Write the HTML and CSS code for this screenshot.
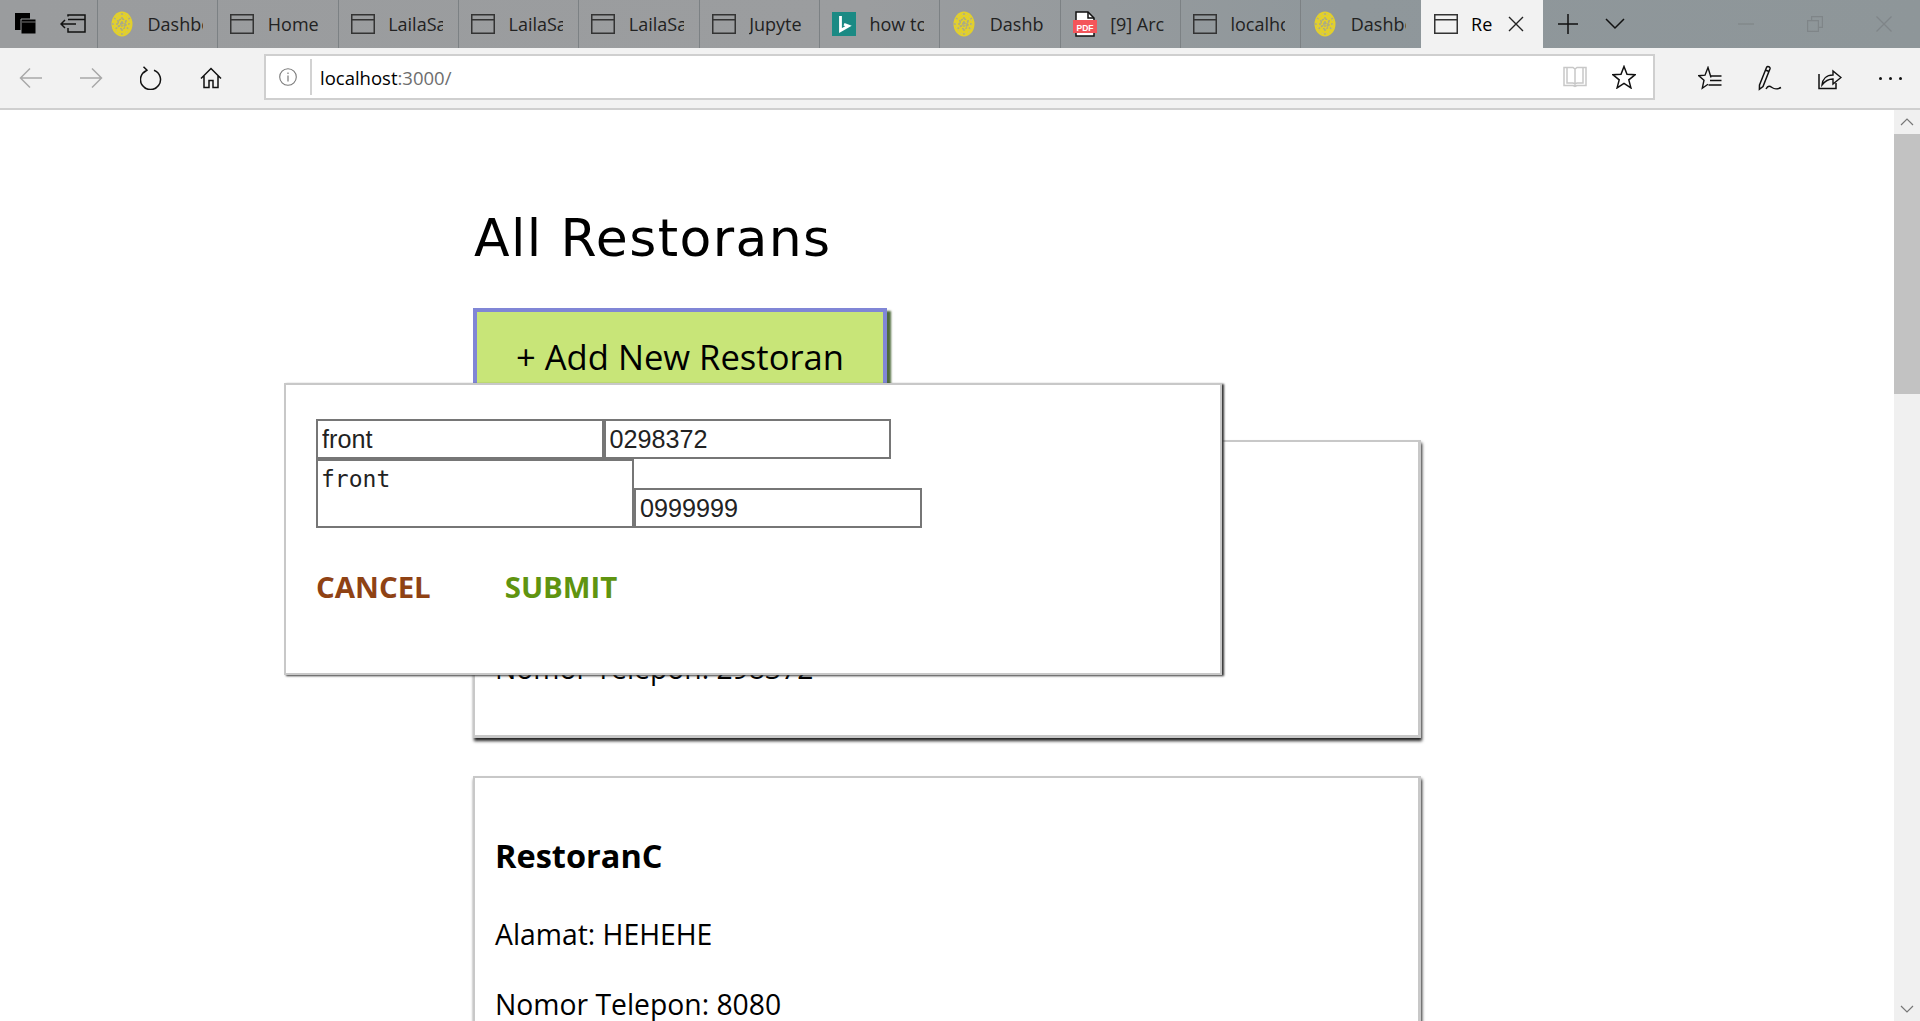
FILE: index.html
```html
<!DOCTYPE html>
<html lang="en">
<head>
    <meta charset="UTF-8">
    <meta name="viewport" content="width=device-width, initial-scale=1.0">
    <title>Restorans</title>
    <link rel="stylesheet" href="styles.css">
</head>
<body>
    <svg class="defs" width="0" height="0">
        <defs>
            <symbol id="page" viewBox="0 0 24 20">
                <path d="M.75.75h22.5v18.5H.75zM.75 5.75h22.5" fill="none" stroke="#333" stroke-width="1.5"/>
            </symbol>
            <symbol id="seal" viewBox="0 0 22 26">
                <ellipse cx="11" cy="13" rx="10.5" ry="12.5" fill="#e3d02a"/>
                <path d="M11 2v22M3 7l16 12M19 7L3 19M1 13h20" stroke="#a9a98a" stroke-width="1.4" stroke-dasharray="2 2"/>
                <ellipse cx="11" cy="13" rx="4" ry="5" fill="none" stroke="#a9a98a" stroke-width="1.4" stroke-dasharray="2 1.5"/>
                <ellipse cx="11" cy="13" rx="8" ry="10" fill="none" stroke="#c9c270" stroke-width="1.2" stroke-dasharray="1.5 2.5"/>
            </symbol>
        </defs>
    </svg>

    <div class="browser">
        <div class="tabbar">
            <div class="tab-controls">
                <svg class="ctl" width="24" height="24" viewBox="0 0 24 24"><path d="M1 1h15v3h-15zM1 4h15v14H1z" fill="#000"/><path d="M7 7h15v15H7z" fill="#000" stroke="#9a9c9e" stroke-width="1"/><path d="M8 10h14" stroke="#777" stroke-width="1"/></svg>
                <svg class="ctl" width="26" height="20" viewBox="0 0 26 20"><path d="M8 2.5V1h17v17H8v-4M8 5.5h17M1 10h15M5 6l-4 4 4 4" fill="none" stroke="#111" stroke-width="1.5"/></svg>
            </div>
            <div class="tab"><svg class="favicon" width="22" height="26"><use href="#seal"/></svg><span class="tab-title">Dashboard</span></div>
            <div class="tab"><svg class="favicon" width="24" height="20"><use href="#page"/></svg><span class="tab-title">Home</span></div>
            <div class="tab"><svg class="favicon" width="24" height="20"><use href="#page"/></svg><span class="tab-title">LailaSalsabila</span></div>
            <div class="tab"><svg class="favicon" width="24" height="20"><use href="#page"/></svg><span class="tab-title">LailaSalsabila</span></div>
            <div class="tab"><svg class="favicon" width="24" height="20"><use href="#page"/></svg><span class="tab-title">LailaSalsabila</span></div>
            <div class="tab"><svg class="favicon" width="24" height="20"><use href="#page"/></svg><span class="tab-title">Jupyte</span></div>
            <div class="tab"><svg class="favicon" width="24" height="24" viewBox="0 0 24 24"><path d="M0 0h24v24H0z" fill="#1b8a84"/><path d="M8.500 4v14.500l8-4.500-4.500-1.800" fill="none" stroke="#fff" stroke-width="2.800"/></svg><span class="tab-title">how to</span></div>
            <div class="tab"><svg class="favicon" width="22" height="26"><use href="#seal"/></svg><span class="tab-title">Dashb</span></div>
            <div class="tab"><svg class="favicon" width="24" height="26" viewBox="0 0 24 26"><path d="M3 1h12l6 6v18H3z" fill="#fff" stroke="#111" stroke-width="1.5"/><path d="M15 1v6h6" fill="none" stroke="#111" stroke-width="1.5"/><path d="M0 9h24v13H0z" fill="#f4555a"/><text class="pdf-label" x="12" y="19.5">PDF</text></svg><span class="tab-title">[9] Arc</span></div>
            <div class="tab"><svg class="favicon" width="24" height="20"><use href="#page"/></svg><span class="tab-title">localhost</span></div>
            <div class="tab"><svg class="favicon" width="22" height="26"><use href="#seal"/></svg><span class="tab-title">Dashboard</span></div>
            <div class="tab tab-active">
                <svg class="favicon" width="24" height="20"><use href="#page"/></svg>
                <span class="tab-title">Re</span>
                <svg class="tab-close" width="16" height="16" viewBox="0 0 16 16"><path d="M1 1l14 14M15 1L1 15" stroke="#222" stroke-width="1.4"/></svg>
            </div>
            <div class="tab-actions">
                <svg width="22" height="22" viewBox="0 0 22 22"><path d="M11 1v20M1 11h20" stroke="#111" stroke-width="1.5"/></svg>
                <svg width="20" height="12" viewBox="0 0 20 12"><path d="M1 1l9 9 9-9" fill="none" stroke="#111" stroke-width="1.5"/></svg>
            </div>
            <div class="window-controls">
                <svg width="16" height="2" viewBox="0 0 16 2"><path d="M0 1h16" stroke="#7f8588" stroke-width="1.2"/></svg>
                <svg width="16" height="16" viewBox="0 0 16 16"><path d="M.6 4.6h10.8v10.8H.6zM4.6 4V.6h10.8v10.8H12" fill="none" stroke="#7f8588" stroke-width="1.2"/></svg>
                <svg width="16" height="16" viewBox="0 0 16 16"><path d="M.5.5l15 15M15.500.5l-15 15" stroke="#7f8588" stroke-width="1.2"/></svg>
            </div>
        </div>

        <div class="toolbar">
            <div class="nav-buttons">
                <div class="tool"><svg width="24" height="22" viewBox="0 0 24 22"><path d="M23 11H2M11 1.500L1.500 11l9.500 9.500" fill="none" stroke="#a9a9a9" stroke-width="1.5"/></svg></div>
                <div class="tool"><svg width="24" height="22" viewBox="0 0 24 22"><path d="M1 11h21M13 1.500l9.500 9.500-9.500 9.500" fill="none" stroke="#a9a9a9" stroke-width="1.500"/></svg></div>
                <div class="tool"><svg width="22" height="24" viewBox="0 0 22 24"><path d="M7 4.200a10 10 0 1 0 7 0M3.500 .8l3.500 3.400-3.600 2.800" fill="none" stroke="#111" stroke-width="1.500"/></svg></div>
                <div class="tool"><svg width="22" height="22" viewBox="0 0 22 22"><path d="M1 11.500L11 1.500l10 10M4 9v11.500h5v-7h4v7h5V9" fill="none" stroke="#111" stroke-width="1.500"/></svg></div>
            </div>
            <div class="urlbar">
                <svg class="info" width="18" height="18" viewBox="0 0 18 18"><circle cx="9" cy="9" r="8.300" fill="none" stroke="#7a7a7a" stroke-width="1.100"/><path d="M9 7.500v6M9 4.500v1.500" stroke="#7a7a7a" stroke-width="1.200"/></svg>
                <div class="url"><span class="host">localhost</span><span class="port">:3000/</span></div>
                <svg class="book" width="24" height="22" viewBox="0 0 24 22"><path d="M1 1.500h9l2 1.500 2-1.500h9v18h-9l-2 1-2-1H1zM12 3v17M4 1.500v15.500h6l2 1 2-1h6V1.500" fill="none" stroke="#c8c8c8" stroke-width="1.500"/></svg>
                <svg class="star" width="24" height="24" viewBox="0 0 24 24"><path d="M12 1.500l3 7.700 8.200.5-6.400 5.200 2.100 8-6.900-4.500-6.900 4.500 2.100-8L.8 9.700 9 9.200z" fill="none" stroke="#111" stroke-width="1.500"/></svg>
            </div>
            <div class="tool-buttons">
                <div class="tool"><svg width="24" height="24" viewBox="0 0 24 24"><path d="M13 11.500L10 1.500 7 9.200l-6.200.5 5.200 4.500-1.700 8 5.700-4" fill="none" stroke="#111" stroke-width="1.400"/><path d="M13 10h10.500M12 14.500h11.500M10.500 19h13" stroke="#111" stroke-width="1.400"/></svg></div>
                <div class="tool"><svg width="24" height="26" viewBox="0 0 24 26"><path d="M1.500 20L8.500 2.500c.9-1.800 4.200-.6 3.500 1.300L5 21.500l-3.600 2.800z M7.500 5l4 1.700" fill="none" stroke="#111" stroke-width="1.500"/><path d="M8 24c2-4 4-3 6-1.500s5 2 9 0" fill="none" stroke="#111" stroke-width="1.400"/></svg></div>
                <div class="tool"><svg width="24" height="24" viewBox="0 0 24 24"><path d="M1 8v14.500h17V17" fill="none" stroke="#111" stroke-width="1.500"/><path d="M4 19c.5-6 4.500-10 11-10V5l8 6.500-8 6.500v-5c-4 0-8 2-11 6z" fill="none" stroke="#111" stroke-width="1.400"/></svg></div>
                <div class="tool"><div class="dots"><span></span><span></span><span></span></div></div>
            </div>
        </div>

        <div class="viewport">
            <main class="page">
                <div class="container">
                    <h1 class="title">All Restorans</h1>
                    <button class="add-btn">+ Add New Restoran</button>

                    <div class="card">
                        <h3 class="card-name">front</h3>
                        <p class="card-line">Alamat: front</p>
                        <p class="card-line">Nomor Telepon: 298372</p>
                    </div>
                    <div class="card">
                        <h3 class="card-name">RestoranC</h3>
                        <p class="card-line">Alamat: HEHEHE</p>
                        <p class="card-line">Nomor Telepon: 8080</p>
                    </div>
                </div>

                <div class="modal">
                    <div class="form-row">
                        <input class="field" type="text" value="front">
                        <input class="field" type="text" value="0298372">
                    </div>
                    <div class="form-row form-row-end">
                        <textarea class="field-area">front</textarea>
                        <input class="field" type="text" value="0999999">
                    </div>
                    <div class="modal-actions">
                        <button class="link-btn cancel">CANCEL</button>
                        <button class="link-btn submit">SUBMIT</button>
                    </div>
                </div>
            </main>

            <div class="scrollbar">
                <div class="scroll-btn"><svg width="14" height="8" viewBox="0 0 14 8"><path d="M1 7l6-6 6 6" fill="none" stroke="#777" stroke-width="1.200"/></svg></div>
                <div class="scroll-thumb"></div>
                <div class="scroll-track"></div>
                <div class="scroll-btn"><svg width="14" height="8" viewBox="0 0 14 8"><path d="M1 1l6 6 6-6" fill="none" stroke="#777" stroke-width="1.200"/></svg></div>
            </div>
        </div>
    </div>
</body>
</html>
```

FILE: styles.css
```css
* {
    box-sizing: border-box;
}
html, body {
    margin: 0;
    padding: 0;
    height: 100%;
    overflow: hidden;
}
body {
    font-family: "Open Sans", sans-serif;
    color: #000;
    background: #fff;
}
.defs {
    position: absolute;
}
.browser {
    display: flex;
    flex-direction: column;
    height: 100vh;
}

/* tab strip */
.tabbar {
    display: flex;
    height: 48px;
    flex: none;
    background: linear-gradient(90deg, #9a9c9e 0%, #9b9d9f 45%, #8f979b 70%, #8e9699 100%);
}
.tab-controls {
    width: 97px;
    flex: none;
    display: flex;
    align-items: center;
    padding-left: 14px;
    gap: 22px;
}
.tab {
    width: 120.33px;
    flex: none;
    display: flex;
    align-items: center;
    padding-left: 12px;
    border-left: 1px solid #7c8184;
    font-size: 18px;
    color: #222;
}
.favicon {
    flex: none;
    width: 24px;
}
.tab-title {
    margin-left: 13.5px;
    width: 55px;
    overflow: hidden;
    white-space: nowrap;
}
.tab-active {
    width: 122px;
    background: #f2f2f2;
    border-left: none;
    padding-left: 13px;
    color: #000;
}
.tab-active .tab-title {
    width: 24px;
}
.tab-close {
    margin-left: 13px;
    flex: none;
}
.tab-actions {
    display: flex;
    align-items: center;
    gap: 26px;
    padding-left: 14px;
}
.window-controls {
    margin-left: auto;
    display: flex;
    align-items: center;
    gap: 53px;
    padding-right: 28px;
}

/* address bar */
.toolbar {
    display: flex;
    height: 62px;
    flex: none;
    padding-top: 6px;
    padding-bottom: 8px;
    padding-left: 1px;
    background: #f2f2f2;
    border-bottom: 2px solid #cfcfcf;
}
.nav-buttons, .tool-buttons {
    display: flex;
    flex: none;
}
.tool-buttons {
    margin-left: 25px;
}
.tool {
    width: 60px;
    padding-top: 2px;
    display: flex;
    align-items: center;
    justify-content: center;
}
.urlbar {
    flex: 1;
    margin-left: 23px;
    display: flex;
    align-items: center;
    background: #fff;
    border: 2px solid #cfcfcf;
}
.info {
    margin-left: 13px;
    flex: none;
}
.url {
    margin-left: 13px;
    padding-left: 8px;
    height: 36px;
    line-height: 37px;
    border-left: 2px solid #d2d2d2;
    font-size: 18.5px;
    flex: 1;
}
.port {
    color: #6e6e6e;
}
.book {
    flex: none;
}
.star {
    flex: none;
    margin-left: 25px;
    margin-right: 17px;
}
.dots {
    display: flex;
    gap: 7px;
}
.dots span {
    width: 3px;
    height: 3px;
    background: #111;
    border-radius: 50%;
}

/* page */
.viewport {
    flex: 1;
    display: flex;
    min-height: 0;
}
.page {
    flex: 1;
    position: relative;
    overflow: hidden;
}
.container {
    width: 948px;
    margin: 0 auto;
}
.title {
    margin: 0;
    padding: 91px 0 0 1px;
    height: 198px;
    font-family: "DejaVu Sans", sans-serif;
    font-weight: 400;
    font-size: 52px;
    line-height: 74px;
    letter-spacing: 1.4px;
}
.add-btn {
    display: block;
    width: 414px;
    height: 96px;
    margin-bottom: 36px;
    padding: 0;
    background: #c8e578;
    border: 4px solid #8086d6;
    box-shadow: 4px 3px 2px #4f6b3c;
    font-family: "Open Sans", sans-serif;
    font-size: 34.6px;
    color: #000;
}
.card {
    height: 298px;
    margin-bottom: 38px;
    padding: 0 20px;
    border: 2px solid #c8c8c8;
    border-right-width: 3px;
    border-bottom-width: 3px;
    box-shadow: 1px 3px 3px #222;
    background: #fff;
}
.card-name {
    margin: 0 0 38px;
    padding-top: 56px;
    font-size: 32.5px;
    line-height: 44px;
    font-weight: 700;
}
.card-line {
    margin: 34px 0 0;
    font-size: 28.3px;
    line-height: 36px;
}

/* add form */
.modal {
    position: absolute;
    left: 284px;
    top: 273px;
    width: 938px;
    height: 292px;
    padding: 34px 30px 0;
    background: #fff;
    border: 2px solid #c8c8c8;
    box-shadow: 2px 1px 2px #333;
}
.form-row {
    display: flex;
}
.form-row-end {
    align-items: flex-end;
}
.field {
    width: 287.5px;
    height: 40px;
    padding: 0 4px;
    border: 2px solid #767676;
    font-family: "Liberation Sans", sans-serif;
    font-size: 25.2px;
    color: #222;
    background: #fff;
}
.field-area {
    width: 318px;
    height: 69px;
    padding: 5px 3px 0;
    border: 2px solid #767676;
    font-family: "DejaVu Sans Mono", monospace;
    font-size: 23px;
    color: #222;
    resize: none;
    background: #fff;
}
.modal-actions {
    display: flex;
    gap: 74px;
    margin-top: 39px;
}
.link-btn {
    padding: 0;
    border: none;
    background: none;
    font-family: "Open Sans", sans-serif;
    font-size: 29.4px;
    font-weight: 700;
}
.cancel {
    color: #8f4214;
}
.submit {
    color: #5f9410;
}

/* scrollbar */
.scrollbar {
    width: 26px;
    flex: none;
    display: flex;
    flex-direction: column;
    background: #f0f0f0;
}
.scroll-btn {
    height: 24px;
    flex: none;
    display: flex;
    align-items: center;
    justify-content: center;
    background: #f0f0f0;
}
.scroll-thumb {
    height: 260px;
    flex: none;
    background: #c2c2c2;
}
.scroll-track {
    flex: 1;
}
.pdf-label {
    font-family: "Liberation Sans", sans-serif;
    font-size: 8.5px;
    font-weight: 700;
    fill: #fff;
    text-anchor: middle;
}
```
